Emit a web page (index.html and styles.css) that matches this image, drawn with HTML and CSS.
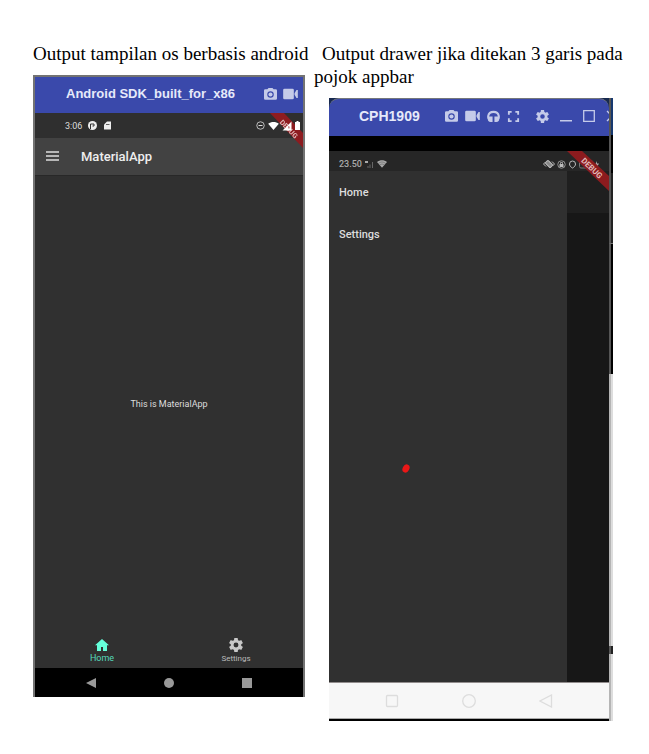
FILE: index.html
```html
<!DOCTYPE html>
<html lang="id">
<head>
<meta charset="utf-8">
<meta name="viewport" content="width=device-width, initial-scale=1">
<title>Output aplikasi</title>
<link rel="stylesheet" href="styles.css">
</head>
<body>
<svg class="defs" aria-hidden="true">
  <symbol id="camera" viewBox="2 2 20 20"><path fill-rule="evenodd" d="M9 2 7.200 4H4a2 2 0 0 0-2 2v12a2 2 0 0 0 2 2h16a2 2 0 0 0 2-2V6a2 2 0 0 0-2-2h-3.200L15 2zM12 7a5 5 0 1 1 0 10 5 5 0 0 1 0-10z"/><circle cx="12" cy="12" r="3.200"/></symbol>
  <symbol id="video" viewBox="0 0 22 18"><path d="M2 1h12a2 2 0 0 1 2 2v12a2 2 0 0 1-2 2H2a2 2 0 0 1-2-2V3a2 2 0 0 1 2-2zM17 8l3-5h2v12h-2l-3-5z"/></symbol>
  <symbol id="gear" viewBox="2 2 20 20"><path d="M19.430 12.980c.04-.32.07-.64.07-.98s-.03-.66-.07-.98l2.110-1.650c.19-.15.24-.42.12-.64l-2-3.460c-.12-.22-.39-.3-.61-.22l-2.490 1c-.52-.4-1.080-.73-1.690-.98l-.38-2.650A.49.49 0 0 0 14 2h-4c-.25 0-.46.18-.49.42l-.38 2.650c-.61.25-1.170.59-1.690.98l-2.490-1c-.23-.09-.49 0-.61.22l-2 3.460c-.13.22-.07.49.12.64l2.110 1.650c-.04.32-.07.65-.07.98s.03.66.07.98l-2.110 1.650c-.19.15-.24.42-.12.64l2 3.460c.12.22.39.3.61.22l2.490-1c.52.4 1.080.73 1.690.98l.38 2.650c.03.24.24.42.49.42h4c.25 0 .46-.18.49-.42l.38-2.650c.61-.25 1.170-.59 1.690-.98l2.490 1c.23.09.49 0 .61-.22l2-3.460c.12-.22.07-.49-.12-.64zM12 15.500a3.500 3.500 0 1 1 0-7 3.500 3.500 0 0 1 0 7z"/></symbol>
  <symbol id="wifi" viewBox="0 0 24 18"><path d="M12 18 0 4C7-1.300 17-1.300 24 4z"/></symbol>
</svg>

<main class="page">
  <section class="column">
    <h2 class="caption">Output tampilan os berbasis android</h2>
    <div class="phone phone-android">
      <header class="titlebar">
        <span class="window-title">Android SDK_built_for_x86</span>
        <button class="tool" aria-label="Screenshot"><svg class="icon-13"><use href="#camera"/></svg></button>
        <button class="tool" aria-label="Record"><svg class="icon-wide"><use href="#video"/></svg></button>
      </header>
      <div class="screen">
        <div class="status">
          <span>3:06</span>
          <svg class="icon-9" viewBox="0 0 18 18"><circle cx="9" cy="9" r="9" fill="#eee"/><path d="M5 16V6h7v4H9" fill="none" stroke="#303030" stroke-width="2"/></svg>
          <svg class="icon-9" viewBox="0 0 18 18"><path fill="#eee" d="M8 1h8v16H2V7z"/><path stroke="#303030" stroke-width="1.500" d="M6 7h7"/></svg>
          <div class="status-end">
            <svg class="icon-9" viewBox="0 0 18 18"><circle cx="9" cy="9" r="7.500" fill="none" stroke="#ddd" stroke-width="1.600"/><path d="M5 9h8" stroke="#ddd" stroke-width="2"/></svg>
            <svg class="icon-wifi white"><use href="#wifi"/></svg>
            <svg class="icon-10 white" viewBox="0 0 20 20"><path fill-rule="evenodd" d="M19 1v18H1zM12 10v5h3v-5z"/></svg>
            <svg class="battery white" viewBox="0 0 10 18"><path d="M3 0h4v2h3v16H0V2h3z"/></svg>
          </div>
        </div>
        <div class="appbar">
          <button class="tool" aria-label="Menu"><svg class="icon-13" viewBox="0 0 13 13"><path d="M0 2h13M0 6h13M0 10h13" stroke="#ddd" stroke-width="1.600"/></svg></button>
          <h1 class="app-title">MaterialApp</h1>
        </div>
        <div class="content">This is MaterialApp</div>
        <nav class="tabs">
          <button class="tab tab-active"><svg class="icon-14" viewBox="0 0 14 14"><path d="M7 1 0 7.300h2V13h4V9h2v4h4V7.300h2z"/></svg>Home</button>
          <button class="tab"><svg class="icon-14"><use href="#gear"/></svg>Settings</button>
        </nav>
        <svg class="ribbon" viewBox="0 0 42 42"><path fill="#8d1c20" d="M9 0h14l19 20v15z"/><text x="29" y="19" transform="rotate(46 29 15)">DEBUG</text></svg>
      </div>
      <nav class="sysnav">
        <button class="tool" aria-label="Back"><svg class="icon-12" viewBox="0 0 12 12"><path d="M11 1v10L1 6z"/></svg></button>
        <button class="tool" aria-label="Home screen"><svg class="icon-12" viewBox="0 0 12 12"><circle cx="6" cy="6" r="5"/></svg></button>
        <button class="tool" aria-label="Recent"><svg class="icon-12" viewBox="0 0 12 12"><path d="M1 1h10v10H1z"/></svg></button>
      </nav>
    </div>
  </section>

  <section class="column">
    <h2 class="caption caption-indent">Output drawer jika ditekan 3 garis pada<br>pojok appbar</h2>
    <div class="phone phone-drawer">
      <div class="device">
        <header class="titlebar">
          <span class="window-title">CPH1909</span>
          <button class="tool" aria-label="Screenshot"><svg class="icon-13"><use href="#camera"/></svg></button>
          <button class="tool" aria-label="Record"><svg class="icon-wide"><use href="#video"/></svg></button>
          <button class="tool" aria-label="Audio"><svg class="icon-13" viewBox="0 0 14 14"><path d="M4 11.500C0 10 0 2 7 2s7 8 3 9.500" fill="none" stroke="#c5cbe9" stroke-width="2.200"/><path d="M2 7h4v6H4a3 3 0 0 1-3-3zM12 7H8v6h2a3 3 0 0 0 3-3z"/></svg></button>
          <button class="tool" aria-label="Fullscreen"><svg class="icon-13" viewBox="0 0 14 14"><path d="M2 5V2h3M9 2h3v3M12 9v3H9M5 12H2V9" fill="none" stroke="#c5cbe9" stroke-width="2"/></svg></button>
          <div class="window-controls">
            <button class="tool" aria-label="Preferences"><svg class="icon-13"><use href="#gear"/></svg></button>
            <button class="tool" aria-label="Minimize"><svg class="icon-12" viewBox="0 0 12 12"><path d="M0 10h12v1.500H0z"/></svg></button>
            <button class="tool" aria-label="Maximize"><svg class="icon-12" viewBox="0 0 12 12"><path d="M.7.7h10.600v10.600H.7z" fill="none" stroke="#c5cbe9" stroke-width="1.300"/></svg></button>
            <button class="tool" aria-label="Close"><svg class="icon-12" viewBox="0 0 12 12"><path d="m1 1 10 10M11 1 1 11" stroke="#c5cbe9" stroke-width="1.300"/></svg></button>
          </div>
        </header>
        <div class="bezel"></div>
        <div class="screen">
          <div class="status">
            <span>23.50</span>
            <svg class="icon-9" viewBox="0 0 18 18"><path fill="#aaa" d="M0 2h6v4H0z"/><path fill="#666" d="M5 12h2v4H5zM9 9h2v7H9zM14 4h2v12h-2z"/></svg>
            <svg class="icon-10 grey" viewBox="0 0 24 18"><path d="M12 18 0 4C7-1.300 17-1.300 24 4z"/><path d="M3 8c6-5 12-5 18 0M6 12c4-4 8-4 12 0" fill="none" stroke="#444" stroke-width="1"/></svg>
            <div class="status-end">
              <svg class="icon-12" viewBox="0 0 24 24"><g fill="#888" stroke="#bbb" stroke-width="2"><rect x="8" y="5" width="8" height="14" rx="2" transform="rotate(-45 12 12)"/><path fill="none" d="m5 8-4 4 5 5M19 16l4-4-5-5"/></g></svg>
              <svg class="icon-9" viewBox="0 0 18 18"><circle cx="9" cy="9" r="7.500" fill="none" stroke="#aaa" stroke-width="1.600"/><path fill="#bbb" d="M5 8h8v6H5z"/><path d="M7 8V5h4v3" fill="none" stroke="#bbb" stroke-width="1.500"/></svg>
              <svg class="icon-9" viewBox="0 0 18 18"><path d="M9 16c-4-2-6-5-6-8a6 6 0 0 1 12 0c0 3-2 6-6 8z" fill="none" stroke="#bbb" stroke-width="2"/></svg>
              <svg class="battery-wide" viewBox="0 0 42 18"><rect x="1" y="1" width="26" height="15" rx="3" fill="none" stroke="#777" stroke-width="2"/><path fill="#aaa" d="M36 2v5h4l-5 9v-6h-3z"/></svg>
            </div>
          </div>
          <div class="drawer-layout">
            <nav class="drawer">
              <a class="drawer-link" href="#home">Home</a>
              <a class="drawer-link" href="#settings">Settings</a>
            </nav>
            <div class="scrim"></div>
          </div>
          <svg class="ribbon" viewBox="0 0 42 42"><path fill="#8c1b1e" d="M0 0h15l27 25v15z"/><text x="25" y="20" transform="rotate(44 25 17)">DEBUG</text></svg>
          <svg class="marker" viewBox="0 0 8 9"><ellipse cx="4" cy="4.500" rx="3.300" ry="4.300" transform="rotate(28 4 4.500)" fill="#ea1717"/></svg>
        </div>
        <nav class="sysnav">
          <button class="tool" aria-label="Recent"><svg class="icon-14" viewBox="0 0 14 14"><rect x="1.500" y="1.500" width="11" height="11" rx="1"/></svg></button>
          <button class="tool" aria-label="Home screen"><svg class="icon-14" viewBox="0 0 14 14"><circle cx="7" cy="7" r="6.300"/></svg></button>
          <button class="tool" aria-label="Back"><svg class="icon-14" viewBox="0 0 14 14"><path d="M12.500 1v12L1 7z"/></svg></button>
        </nav>
      </div>
      <div class="edge"><i class="edge-sky"></i><i class="edge-dark"></i><i class="edge-mid"></i><i class="edge-black"></i><i class="edge-light"></i><i class="edge-notch"></i><i class="edge-tail"></i></div>
    </div>
  </section>
</main>
</body>
</html>
```
FILE: styles.css
```css
* { box-sizing: border-box; }
body { margin: 0; background: #fff; font-family: Roboto, "Liberation Sans", sans-serif; }
button { padding: 0; border: 0; background: none; font: inherit; color: inherit; }
svg { display: block; flex: none; }
.defs { position: absolute; width: 0; height: 0; }

.page { display: grid; grid-template-columns: minmax(0, 272fr) minmax(0, 303fr); gap: 9px; align-items: start; padding: 42px 32px 32px 33px; }
.caption { margin: 0 0 10px; font: 19px/23px "Liberation Serif", serif; color: #000; white-space: nowrap; }
.caption-indent { text-indent: 8px; }

.phone { display: flex; }
.phone-android { flex-direction: column; aspect-ratio: 272 / 622; border: 2px solid #737373; border-bottom: 0; }
.phone-drawer { aspect-ratio: 284 / 623; margin: 0 4px 0 15px; background: #17294f; }
.device { flex: 1; display: flex; flex-direction: column; min-width: 0; border-bottom: 2px solid #000; }

.titlebar { display: flex; align-items: center; height: 36px; background: #3a49ab; color: #e6e9fa; fill: #c5cbe9; font: bold 13px/16px "Liberation Sans", sans-serif; }
.phone-android .titlebar { gap: 6px; padding: 0 5px 2px 31px; }
.phone-drawer .titlebar { gap: 7px; height: 38px; padding: 0 0 3px 30px; border-top: 1px solid #74777c; border-radius: 10px 10px 0 0; overflow: hidden; font-size: 14px; }
.window-title { flex: 1; white-space: nowrap; }
.window-controls { display: flex; align-items: center; gap: 11px; margin: 0 -9px 0 9px; }

.icon-9 { width: 9px; height: 9px; }
.icon-10 { width: 10px; height: 10px; }
.icon-12 { width: 12px; height: 12px; }
.icon-13 { width: 13px; height: 13px; }
.icon-14 { width: 14px; height: 14px; }
.icon-wide { width: 15px; height: 12px; }
.icon-wifi { width: 11px; height: 8px; }
.battery { width: 5px; height: 9px; }
.battery-wide { width: 21px; height: 9px; }
.white { fill: #fff; }
.grey { fill: #aaa; }

.screen { position: relative; flex: 1; display: flex; flex-direction: column; background: #303030; overflow: hidden; }
.status { display: flex; align-items: center; gap: 6px; height: 25px; padding: 0 3px 0 30px; background: #2f2f2f; color: #ddd; font-size: 9px; }
.status-end { display: flex; align-items: center; gap: 3px; margin-left: auto; }
.phone-drawer .status { height: 20px; gap: 3px; padding: 6px 9px 0 10px; background: #262626; color: #aaa; font-weight: 500; }
.phone-drawer .status-end { gap: 2px; }
.phone-android .status-end { position: relative; z-index: 1; }
.ribbon { position: absolute; z-index: 0; top: 0; right: 0; width: 42px; height: 42px; }
.phone-android .ribbon { z-index: 1; }
.ribbon text { fill: #e0b9b9; font: bold 7px Roboto, sans-serif; text-anchor: middle; }
.phone-android .ribbon path { mix-blend-mode: darken; }
.phone-drawer .ribbon text { font-size: 8px; }
.phone-android .status-end { z-index: 2; }

.appbar { display: flex; align-items: center; gap: 22px; height: 38px; padding: 0 11px; background: #424242; border-bottom: 1px solid #282828; }
.app-title { margin: 0; color: #eee; font-size: 13px; font-weight: 500; }
.content { flex: 1; display: grid; place-items: center; padding-top: 4px; color: #ddd; font-size: 9px; }
.tabs { display: flex; height: 40px; color: #bbb; fill: #c8c8c8; font-size: 8px; line-height: 11px; }
.tab { flex: 1; display: flex; flex-direction: column; align-items: center; gap: 1px; padding-top: 10px; }
.tab-active { color: #55d9bb; fill: #64ffda; font-size: 9px; }
.tool { flex: none; }

.sysnav { display: flex; justify-content: center; align-items: center; gap: 66px; height: 29px; background: #000; fill: #999; }
.phone-drawer .sysnav { gap: 63px; height: 37px; background: #f7f7f7; border-top: 1px solid #928d8d; border-bottom: 1px solid #aaa; fill: none; stroke: #ddd; stroke-width: 1.300px; }

.bezel { height: 15px; background: #000; }
.drawer-layout { flex: 1; display: flex; }
.drawer { flex: 238; display: flex; flex-direction: column; padding-top: 1px; }
.drawer-link { padding: 0 10px; color: #ddd; font-size: 11px; font-weight: 500; line-height: 42px; text-decoration: none; }
.scrim { flex: 42; background: #171717; border-top: 42px solid #1f1f1f; }
.marker { position: absolute; left: 26%; top: 59%; width: 8px; height: 9px; }

.edge { display: flex; flex-direction: column; width: 4px; }
.edge i { border-left: 2px solid #555; }
.edge-sky { flex: 37; background: #17396f; }
.edge-dark { flex: 38; background: #000; }
.edge-mid { flex: 70; background: #222; }
.edge-black { flex: 130; background: #000; border-top: 1px solid #777; }
.edge .edge-light, .edge .edge-tail { background: #ddd; border-color: #b5b5b5; }
.edge-light { flex: 273; }
.edge-notch { flex: 8; background: #222; }
.edge-tail { flex: 67; }
```
